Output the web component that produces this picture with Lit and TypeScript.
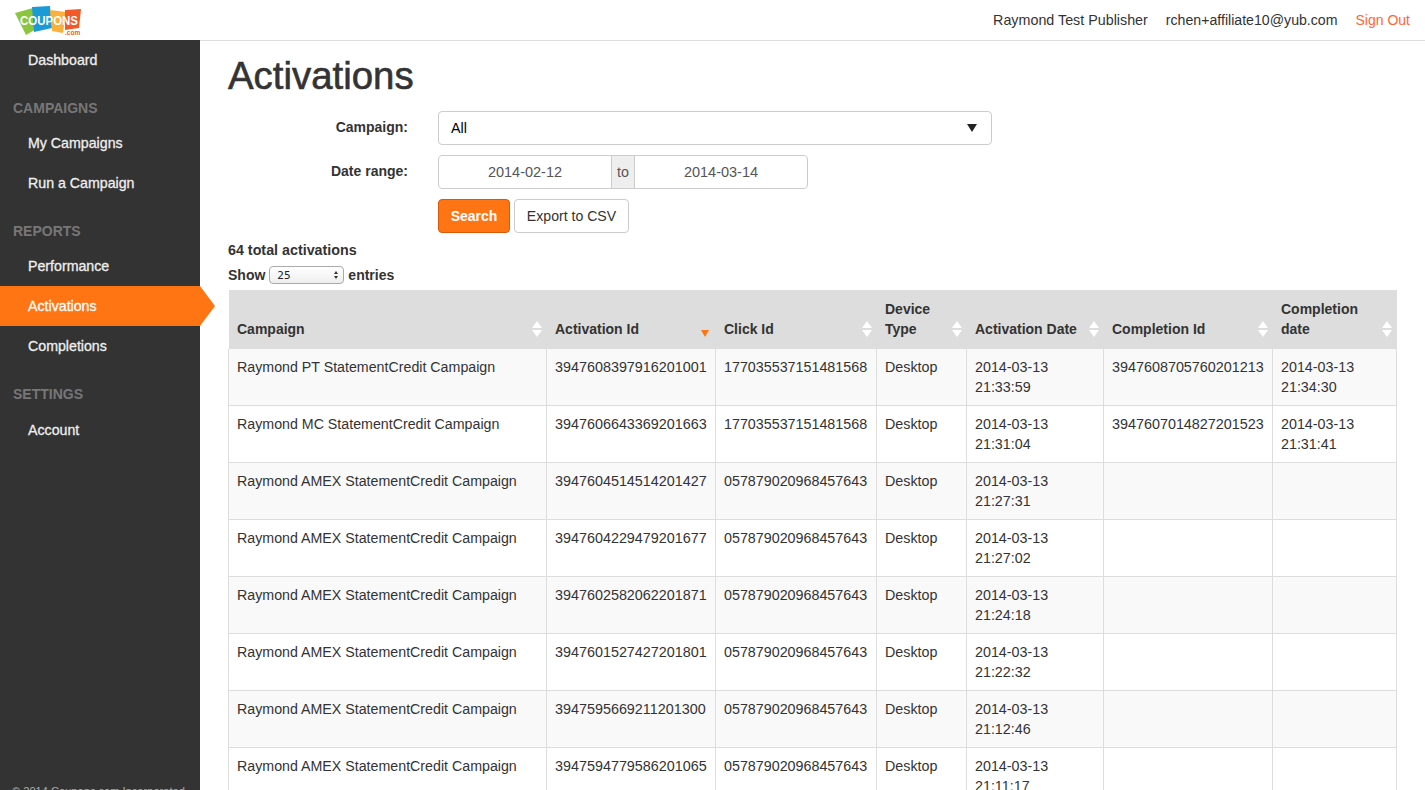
import { LitElement, html, css } from "lit";
import { customElement } from "lit/decorators.js";

const rows = [
  ["Raymond PT StatementCredit Campaign", "3947608397916201001", "177035537151481568", "Desktop", "21:33:59", "3947608705760201213", "2014-03-13", "21:34:30"],
  ["Raymond MC StatementCredit Campaign", "3947606643369201663", "177035537151481568", "Desktop", "21:31:04", "3947607014827201523", "2014-03-13", "21:31:41"],
  ["Raymond AMEX StatementCredit Campaign", "3947604514514201427", "057879020968457643", "Desktop", "21:27:31", "", "", ""],
  ["Raymond AMEX StatementCredit Campaign", "3947604229479201677", "057879020968457643", "Desktop", "21:27:02", "", "", ""],
  ["Raymond AMEX StatementCredit Campaign", "3947602582062201871", "057879020968457643", "Desktop", "21:24:18", "", "", ""],
  ["Raymond AMEX StatementCredit Campaign", "3947601527427201801", "057879020968457643", "Desktop", "21:22:32", "", "", ""],
  ["Raymond AMEX StatementCredit Campaign", "3947595669211201300", "057879020968457643", "Desktop", "21:12:46", "", "", ""],
  ["Raymond AMEX StatementCredit Campaign", "3947594779586201065", "057879020968457643", "Desktop", "21:11:17", "", "", ""],
];

const heads = [
  ["Campaign"],
  ["Activation Id"],
  ["Click Id"],
  ["Device", "Type"],
  ["Activation Date"],
  ["Completion Id"],
  ["Completion", "date"],
];

@customElement("app-root")
export class AppRoot extends LitElement {
  static styles = css`
    :host { display: block; height: 790px; overflow: hidden; font-family: "Liberation Sans", Arial, sans-serif; font-size: 14.3px; line-height: 20px; color: #333; background: #fff; }
    .top { height: 40px; border-bottom: 1px solid #ddd; display: flex; align-items: center; justify-content: space-between; padding: 0 15px 0 15px; box-sizing: content-box; }
    .logo { display: block; width: 70px; height: 40px; }
    .logo text { font-family: "Liberation Sans", Arial, sans-serif; }
    .user { display: flex; gap: 18px; }
    .mail { font-size: 14.15px; }
    .out { color: #ff6633; font-size: 14px; }
    .body { display: flex; height: 749px; }
    .side { width: 200px; flex: none; background: #333; display: flex; flex-direction: column; margin-top: -1px; height: 750px; }
    .item { height: 40px; line-height: 40px; padding-left: 28px; color: #eee; position: relative; font-size: 14.2px; font-weight: 400; -webkit-text-stroke: 0.3px #eee; }
    .item.on { background: #ff7514; color: #fff; -webkit-text-stroke: 0.3px #fff; }
    .item.on::after { content: ""; position: absolute; left: 200px; top: 0; border-left: 15px solid #ff7514; border-top: 20px solid transparent; border-bottom: 20px solid transparent; }
    .lab { margin: 18px 0 5px; padding-left: 13px; height: 20px; font-weight: 700; color: #777; font-size: 14px; }
    .lab.last { margin-bottom: 6px; }
    .copy { margin-top: auto; margin-bottom: -11px; padding-left: 12px; font-size: 11.1px; color: #aaa; white-space: nowrap; }
    main { flex: 1; padding: 0 28px; min-width: 0; }
    h1 { margin: 14px 0 15px; font-size: 38.4px; line-height: 41px; font-weight: 400; color: #333; -webkit-text-stroke: 0.6px #333; }
    .row { display: flex; margin-bottom: 10px; }
    .lbl { width: 210px; padding-right: 30px; box-sizing: border-box; text-align: right; font-weight: 700; line-height: 32px; font-size: 14px; }
    .sel { width: 554px; height: 34px; box-sizing: border-box; border: 1px solid #ccc; border-radius: 4px; display: flex; align-items: center; justify-content: space-between; padding: 0 14px 0 12px; color: #000; }
    .tri { width: 0; height: 0; border-left: 5px solid transparent; border-right: 5px solid transparent; border-top: 8px solid #222; }
    .dates { display: flex; height: 34px; width: 370px; box-sizing: border-box; border: 1px solid #ccc; border-radius: 4px; color: #555; font-size: 14.5px; }
    .dates span { display: flex; align-items: center; justify-content: center; }
    .dates .d { flex: 1; }
    .dates .to { width: 22px; background: #eee; border-left: 1px solid #ccc; border-right: 1px solid #ccc; font-size: 14.3px; }
    .btns { padding-left: 210px; display: flex; gap: 4px; margin-bottom: 7px; }
    .btn { height: 34px; width: 115px; box-sizing: border-box; border: 1px solid #ccc; border-radius: 4px; display: flex; align-items: center; justify-content: center; color: #333; font-size: 14.1px; }
    .btn.pri { width: 72px; background: #ff7514; border-color: #d9590b; color: #fff; font-weight: 700; font-size: 14px; }
    .total { font-weight: 700; height: 20px; margin-bottom: 5px; }
    .show { display: flex; align-items: center; gap: 4px; font-weight: 700; height: 20px; margin-bottom: 5px; font-size: 14px; }
    .mini { width: 75px; height: 18px; box-sizing: border-box; border: 1px solid #aaa; border-radius: 4px; background: linear-gradient(#fff, #eee); display: flex; align-items: center; justify-content: space-between; padding: 0 5px 0 7px; font: 400 11px "DejaVu Sans Mono", monospace; color: #222; }
    .updn { display: flex; flex-direction: column; gap: 2px; }
    .updn i { display: block; width: 0; height: 0; border-left: 2px solid transparent; border-right: 2px solid transparent; }
    .updn i:first-child { border-bottom: 3px solid #333; }
    .updn i:last-child { border-top: 3px solid #333; }
    table { border-collapse: collapse; table-layout: fixed; width: 1168px; }
    th { background: #ddd; text-align: left; vertical-align: bottom; padding: 9px 8px 10px 8.5px; font-weight: 700; font-size: 14px; position: relative; height: 40px; box-sizing: content-box; border: 0; }
    td { border: 1px solid #ddd; padding: 8px; vertical-align: top; height: 40px; box-sizing: content-box; }
    td:first-child { font-size: 14.22px; }
    td.num { font-size: 14.37px; }
    tbody tr:first-child td { border-top: 0; }
    tbody tr:nth-child(odd) td { background: #f9f9f9; }
    .sort { position: absolute; right: 5px; bottom: 12px; width: 10px; height: 16px; }
    .sort::before, .sort::after { content: ""; position: absolute; left: 0; border-left: 5px solid transparent; border-right: 5px solid transparent; }
    .sort::before { top: 0; border-bottom: 7px solid #fff; }
    .sort::after { bottom: 0; border-top: 7px solid #fff; }
    .sort.act::before { display: none; }
    .sort.act::after { border-left-width: 4px; border-right-width: 4px; border-top-color: #ff7514; }
  `;

  render() {
    const widths = [318, 169, 161, 90, 137, 169, 124];
    return html`
      <div class="top">
        <svg class="logo" viewBox="15 0 70 40" aria-label="Coupons.com logo">
          <polygon points="15,13 33,8 38,28 26,35" fill="#8cc63f" />
          <polygon points="32,7 50,6 52,28 34,32" fill="#1b9ad6" />
          <polygon points="50,10 66,12 63,33 52,31" fill="#fbb03b" />
          <polygon points="65,10 81,9 79,28 65,30" fill="#f15a29" />
          <text x="20" y="24.5" font-size="12.5" font-weight="700" fill="#fff" textLength="58" lengthAdjust="spacingAndGlyphs">COUPONS</text>
          <text x="65" y="35" font-size="6.5" font-weight="700" fill="#f15a29">.com</text>
        </svg>
        <div class="user">
          <span>Raymond Test Publisher</span>
          <span class="mail">rchen+affiliate10@yub.com</span>
          <span class="out">Sign Out</span>
        </div>
      </div>
      <div class="body">
        <nav class="side">
          <div class="item">Dashboard</div>
          <div class="lab">CAMPAIGNS</div>
          <div class="item">My Campaigns</div>
          <div class="item">Run a Campaign</div>
          <div class="lab">REPORTS</div>
          <div class="item">Performance</div>
          <div class="item on">Activations</div>
          <div class="item">Completions</div>
          <div class="lab last">SETTINGS</div>
          <div class="item">Account</div>
          <div class="copy">© 2014 Coupons.com Incorporated</div>
        </nav>
        <main>
          <h1>Activations</h1>
          <div class="row">
            <div class="lbl">Campaign:</div>
            <div class="sel"><span>All</span><span class="tri"></span></div>
          </div>
          <div class="row">
            <div class="lbl">Date range:</div>
            <div class="dates"><span class="d">2014-02-12</span><span class="to">to</span><span class="d">2014-03-14</span></div>
          </div>
          <div class="btns">
            <div class="btn pri">Search</div>
            <div class="btn">Export to CSV</div>
          </div>
          <div class="total">64 total activations</div>
          <div class="show">Show <span class="mini"><span>25</span><span class="updn"><i></i><i></i></span></span> entries</div>
          <table>
            <colgroup>${widths.map((w) => html`<col style="width:${w}px" />`)}</colgroup>
            <thead>
              <tr>
                ${heads.map(
                  (h, i) => html`<th>${h[0]}${h[1] ? html`<br />${h[1]}` : ""}<span class="sort ${i === 1 ? "act" : ""}"></span></th>`
                )}
              </tr>
            </thead>
            <tbody>
              ${rows.map(
                (r) => html`<tr>
                  <td>${r[0]}</td>
                  <td class="num">${r[1]}</td>
                  <td>${r[2]}</td>
                  <td>${r[3]}</td>
                  <td>2014-03-13<br />${r[4]}</td>
                  <td class="num">${r[5]}</td>
                  <td>${r[6]}${r[7] ? html`<br />${r[7]}` : ""}</td>
                </tr>`
              )}
            </tbody>
          </table>
        </main>
      </div>
    `;
  }
}
